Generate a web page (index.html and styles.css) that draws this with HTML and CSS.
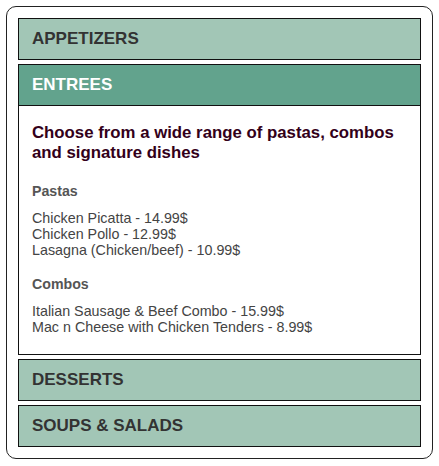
FILE: index.html
```html
<!DOCTYPE html>
<html lang="en">
  <head>
    <meta charset="UTF-8" />
    <meta name="viewport" content="width=device-width, initial-scale=1.0" />
    <title>Menu</title>
    <link rel="stylesheet" href="styles.css">
  </head>
  <body>
    <div class="menu">
      <div class="section">
        <h2 class="section-title">APPETIZERS</h2>
      </div>

      <div class="section open">
        <h2 class="section-title">ENTREES</h2>
        <div class="section-body">
          <h3 class="intro">Choose from a wide range of pastas, combos and signature dishes</h3>

          <h4 class="group">Pastas</h4>
          <p class="items">
            Chicken Picatta - 14.99$<br />
            Chicken Pollo - 12.99$<br />
            Lasagna (Chicken/beef) - 10.99$
          </p>

          <h4 class="group">Combos</h4>
          <p class="items">
            Italian Sausage &amp; Beef Combo - 15.99$<br />
            Mac n Cheese with Chicken Tenders - 8.99$
          </p>
        </div>
      </div>

      <div class="section">
        <h2 class="section-title">DESSERTS</h2>
      </div>

      <div class="section">
        <h2 class="section-title">SOUPS &amp; SALADS</h2>
      </div>
    </div>

    <script>
      const titles = document.querySelectorAll(".section-title");

      titles.forEach(function (title) {
        title.addEventListener("click", function () {
          const section = title.parentNode;
          if (!section.querySelector(".section-body")) return;
          section.classList.toggle("open");
        });
      });
    </script>
  </body>
</html>
```

FILE: styles.css
```css
body {
  font-family: "Liberation Sans", Arial, Helvetica, sans-serif;
  background-color: #fff;
  margin: 6px;
}
.menu {
  border: 1px solid #222;
  border-radius: 10px;
  padding: 11px;
}
.section {
  margin-top: 4px;
}
.section:first-child {
  margin-top: 0;
}
.section-title {
  margin: 0;
  padding: 10px 13px;
  font-size: 17px;
  line-height: 20px;
  font-weight: bold;
  color: #333;
  background-color: #a2c6b6;
  border: 1px solid #111;
  cursor: pointer;
}
.open .section-title {
  background-color: #62a38d;
  color: #fff;
}
.section-body {
  display: none;
  padding: 17px 13px 19px;
  border: 1px solid #111;
  border-top: none;
}
.open .section-body {
  display: block;
}
.intro {
  margin: 0 0 20px;
  font-size: 16.8px;
  line-height: 20px;
  color: #33001a;
}
.group {
  margin: 0 0 11px;
  font-size: 14.2px;
  line-height: 16px;
  color: #555;
}
.items {
  margin: 0 0 18px;
  font-size: 14.3px;
  line-height: 16px;
  color: #444;
}
.items:last-child {
  margin-bottom: 0;
}
```
